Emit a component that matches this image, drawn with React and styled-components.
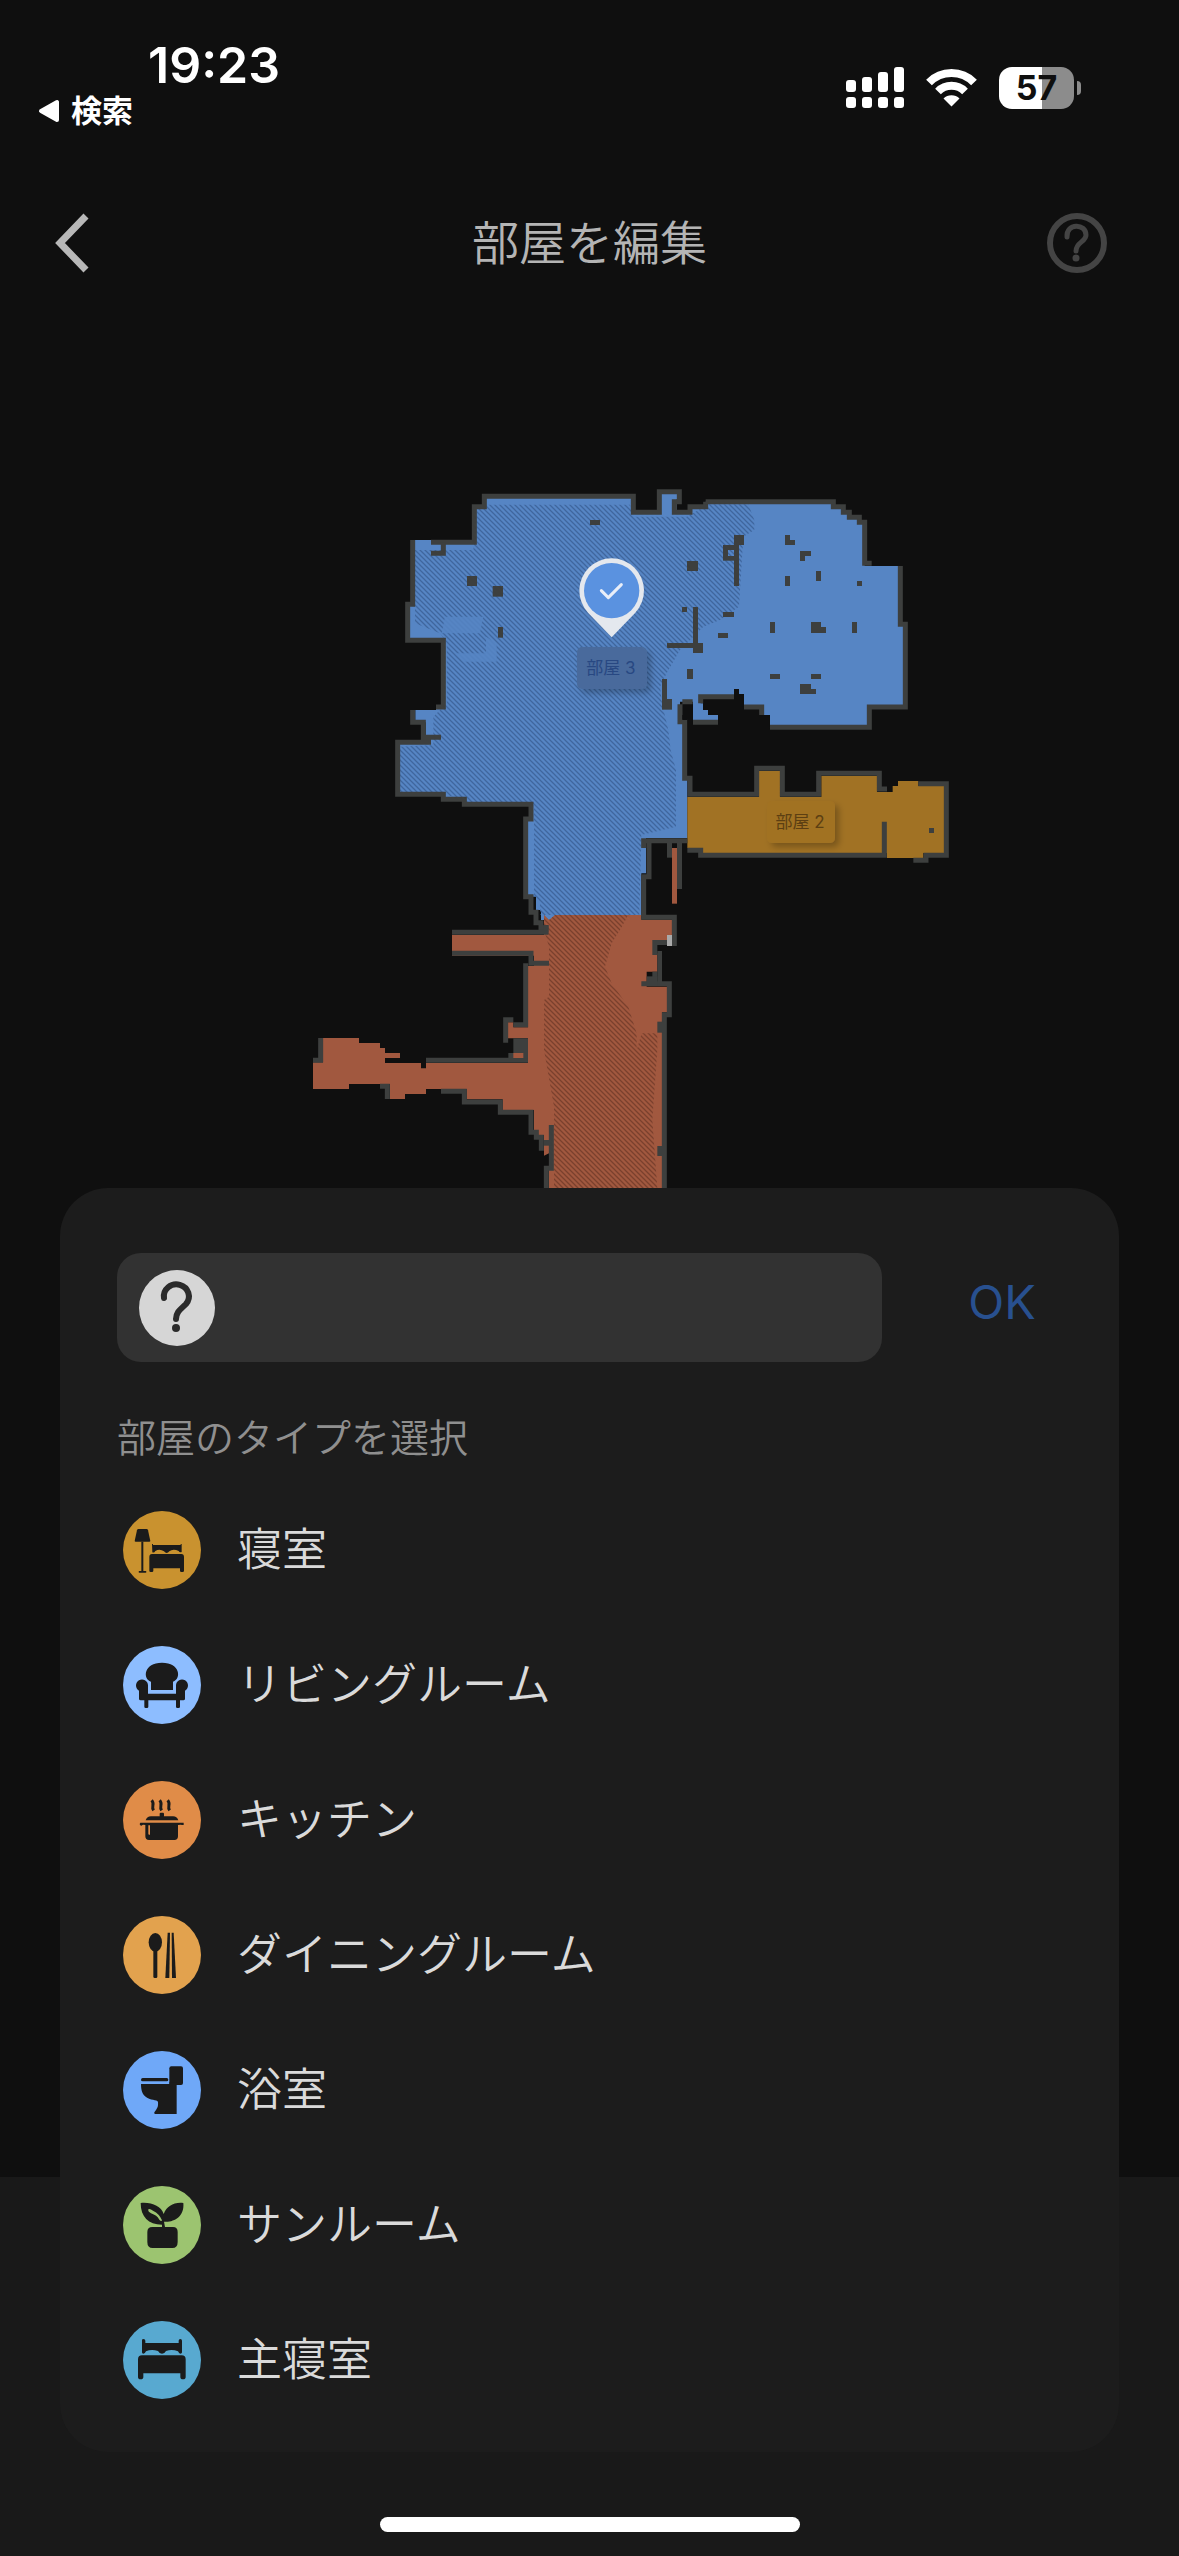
import React, { useState } from "react";
import styled, { createGlobalStyle } from "styled-components";

const GlobalStyle = createGlobalStyle`
  * { box-sizing: border-box; }
  body {
    margin: 0;
    background: #0f0f0f;
    font-family: Inter, "Noto Sans CJK JP", sans-serif;
  }
  button, input { font: inherit; color: inherit; }
`;

const Screen = styled.div`
  min-height: 100vh;
  display: flex;
  flex-direction: column;
  background: #0f0f0f;
`;

/* ---------- status bar ---------- */

const StatusBar = styled.header`
  height: 183px;
  padding: 36px 98px 0 38px;
  display: flex;
  justify-content: space-between;
  align-items: flex-start;
  color: #fff;
`;

const StatusLeft = styled.div`
  display: flex;
  flex-direction: column;
`;

const Clock = styled.time`
  padding-left: 110px;
  font-size: 50px;
  font-weight: 600;
  line-height: 58px;
`;

const ReturnLink = styled.a`
  display: flex;
  align-items: center;
  gap: 11px;
  font-size: 31px;
  font-weight: 700;
  line-height: 34px;
  color: #fff;
  text-decoration: none;
`;

const StatusIcons = styled.div`
  display: flex;
  align-items: center;
  gap: 22px;
  padding-top: 31px;
`;

const Battery = styled.div`
  display: flex;
  align-items: center;
  gap: 3px;
`;

const BatteryBody = styled.div`
  width: 75px;
  height: 42px;
  border-radius: 13px;
  background: linear-gradient(90deg, #fff 57%, #8c8c8c 57%);
  color: #0f0f0f;
  font-size: 34px;
  font-weight: 700;
  line-height: 42px;
  text-align: center;
`;

const BatteryTip = styled.div`
  width: 4px;
  height: 14px;
  border-radius: 0 6px 6px 0;
  background: #8c8c8c;
`;

/* ---------- navigation ---------- */

const NavBar = styled.nav`
  height: 120px;
  padding: 0 72px 0 46px;
  display: grid;
  grid-template-columns: 86px 1fr 60px;
  align-items: center;
`;

const Title = styled.h1`
  margin: 0;
  font-size: 47px;
  font-weight: 350;
  line-height: 60px;
  text-align: center;
  color: #b4b4b4;
`;

const IconButton = styled.button`
  height: 60px;
  padding: 0;
  border: 0;
  background: none;
  display: flex;
  align-items: center;
  cursor: pointer;
`;

/* ---------- stage ---------- */

const Stage = styled.main`
  flex: 1;
  display: grid;
  grid-template-columns: minmax(0, 1fr);
`;

const Backdrop = styled.div`
  grid-area: 1 / 1;
  display: flex;
  flex-direction: column;
  justify-content: space-between;
`;

const MapDrawing = styled.svg`
  width: 100%;
  height: 885px;
  display: block;
`;

const LowerStrip = styled.div`
  height: 379px;
  background: #191919;
`;

const Foreground = styled.div`
  grid-area: 1 / 1;
  padding-top: 885px;
  display: flex;
  flex-direction: column;
`;

const Sheet = styled.section`
  margin: 0 60px;
  padding: 65px 57px 25px;
  border-radius: 48px;
  background: #1c1c1c;
`;

const NameRow = styled.form`
  display: flex;
  align-items: flex-start;
  gap: 60px;
`;

const NameField = styled.label`
  flex: 1;
  min-width: 0;
  height: 109px;
  padding: 0 22px;
  display: flex;
  align-items: center;
  gap: 20px;
  border-radius: 24px;
  background: #323232;
`;

const NameInput = styled.input`
  flex: 1;
  min-width: 0;
  border: 0;
  outline: 0;
  background: transparent;
  font-size: 45px;
  color: #d8d8d8;
`;

const OkButton = styled.button`
  flex: none;
  width: 120px;
  height: 96px;
  padding: 0;
  border: 0;
  background: none;
  font-size: 47px;
  font-weight: 400;
  color: #28508f;
  cursor: pointer;
`;

const SectionLabel = styled.h2`
  margin: 48px 0 16px;
  font-size: 39px;
  font-weight: 350;
  line-height: 56px;
  color: #8f8f8f;
`;

const TypeList = styled.ul`
  margin: 0;
  padding: 0 0 0 6px;
  list-style: none;
`;

const TypeButton = styled.button`
  width: 100%;
  height: 135px;
  padding: 0;
  border: 0;
  background: none;
  display: flex;
  align-items: center;
  gap: 36px;
  font-size: 45px;
  font-weight: 350;
  line-height: 60px;
  color: #dadada;
  text-align: left;
  cursor: pointer;
`;

const HomeArea = styled.footer`
  padding: 65px 0 24px;
  display: flex;
  justify-content: center;
`;

const HomeIndicator = styled.div`
  width: 420px;
  height: 15px;
  border-radius: 8px;
  background: #fff;
`;

/* ---------- small icons ---------- */

const ReturnArrow = () => (
  <svg width="22" height="24" viewBox="0 0 22 24" aria-hidden="true">
    <path d="M19 3 V21 L3 12 Z" fill="#fff" stroke="#fff" strokeWidth="4" strokeLinejoin="round" />
  </svg>
);

const SignalIcon = () => (
  <svg width="58" height="42" viewBox="0 0 58 42" fill="#fff" aria-hidden="true">
    {[13, 10, 5, 0].map((top, i) => (
      <g key={top}>
        <rect x={i * 16} y={top} width="10" height={25 - top} rx="3" />
        <rect x={i * 16} y="30" width="10" height="11" rx="3" />
      </g>
    ))}
  </svg>
);

const WifiIcon = () => (
  <svg width="51" height="38" viewBox="0 0 51 38" aria-hidden="true">
    <g fill="none" stroke="#fff" strokeWidth="8">
      <path d="M3 13.5 A31.500 31.500 0 0 1 48 13.500" />
      <path d="M12 22.500 A19 19 0 0 1 39 22.500" />
    </g>
    <path d="M25.500 37.500 L17.500 29.500 A11.500 11.500 0 0 1 33.500 29.500 Z" fill="#fff" />
  </svg>
);

const BackIcon = () => (
  <svg width="50" height="60" viewBox="0 0 50 60" aria-hidden="true">
    <path d="M40 3 L14 30 L40 57" fill="none" stroke="#b8b8b8" strokeWidth="7" />
  </svg>
);

const HelpIcon = () => (
  <svg width="60" height="60" viewBox="0 0 60 60" fill="none" stroke="#444" aria-hidden="true">
    <circle cx="30" cy="30" r="27" strokeWidth="6" />
    <path d="M20 24 C19 10 39 10 39 22 C39 29 29 29 29 38" strokeWidth="5" strokeLinecap="round" />
    <circle cx="29" cy="45" r="3.500" fill="#444" stroke="none" />
  </svg>
);

const UnknownRoomIcon = () => (
  <svg width="76" height="76" viewBox="0 0 76 76" aria-hidden="true">
    <circle cx="38" cy="38" r="38" fill="#d6d6d6" />
    <path
      d="M25 28 A12.500 12 0 1 1 47 34 C42 39 37 42 37 49"
      fill="none" stroke="#2b2b2b" strokeWidth="6" strokeLinecap="round"
    />
    <circle cx="37" cy="58" r="4" fill="#2b2b2b" />
  </svg>
);

/* ---------- room type icons ---------- */

const glyphs = {
  bedroom: (
    <>
      <path d="M46 54 H71 Q74 54 75 58 L82 90 Q82 92 79 92 H38 Q35 92 35 90 L42 58 Q43 54 46 54 Z" />
      <rect x="55" y="92" width="6" height="90" />
      <rect x="47" y="180" width="23" height="5" rx="2" />
      <path d="M87 99 H90 V102 H173 V99 H176 V123 Q170 126 167 120 Q150 112 139 121 Q135 126 131 126 Q127 126 123 121 Q110 112 97 120 Q94 126 88 124 Z" />
      <path d="M87 129 H175 Q183 129 183 138 V179 Q183 183 179 183 H175 Q171 183 171 179 V172 H91 V179 Q91 183 87 183 H83 Q79 183 79 179 V138 Q79 129 87 129 Z" />
    </>
  ),
  living: (
    <>
      <path d="M84 132 V107 C58 98 62 50 117 50 C172 50 176 98 150 107 V132 Z" />
      <path d="M48 134 A18 18 0 1 1 75 118 V143 H159 V118 A18 18 0 1 1 186 134 V158 Q186 163 181 163 H171 V182 Q171 186 167 186 H163 Q159 186 159 182 V163 H76 V182 Q76 186 72 186 H68 Q64 186 64 182 V163 H53 Q48 163 48 158 Z" />
    </>
  ),
  kitchen: (
    <>
      <g fill="none" stroke="#1b1b1b" strokeWidth="9">
        <path d="M86 58 C97 70 83 76 92 88" />
        <path d="M110 58 C121 70 107 76 116 88" />
        <path d="M134 58 C145 70 131 76 140 88" />
      </g>
      <rect x="110" y="95" width="13" height="14" rx="3" />
      <path d="M68 118 Q72 106 84 106 H150 Q162 106 166 118 Z" />
      <path
        fillRule="evenodd"
        d="M52 125 H182 V132 H177 Q175 130 165 132 V166 Q165 177 154 177 H78 Q67 177 67 166 V132 Q58 130 56 134 Q50 134 50 129 Z M76 133 V158 Q76 161 79 161 H81 V133 Z"
      />
    </>
  ),
  dining: (
    <>
      <ellipse cx="97" cy="79" rx="20" ry="28" />
      <rect x="91" y="96" width="12" height="90" rx="4" />
      <path d="M134 50 H141 L139 186 H127 Z" />
      <path d="M146 50 H152 L159 186 H147 Z" />
    </>
  ),
  bath: (
    <>
      <rect x="139" y="46" width="41" height="56" rx="6" />
      <rect x="54" y="81" width="82" height="10" rx="5" />
      <path d="M54 99 H139 V94 H161 V189 H97 Q92 189 94 184 C103 172 106 168 105 153 C102 145 82 150 66 136 C56 127 54 112 54 99 Z" />
    </>
  ),
  sunroom: (
    <path
      fillRule="evenodd"
      d="M53 51 C86 48 114 60 122 84 C132 60 152 48 181 51 C185 92 152 110 123 107 L126 123 H150 Q164 123 164 138 V168 Q164 186 148 186 H89 Q73 186 73 168 V138 Q73 123 88 123 H117 V116 C76 116 53 92 53 51 Z M76 70 Q74 77 84 82 Q102 88 109 101 Q115 108 117 103 Q110 84 90 74 Q80 66 76 70 Z"
    />
  ),
  master: (
    <>
      <path d="M57 58 Q57 54 61 54 Q67 54 67 59 V66 H167 V59 Q167 54 172 54 Q177 54 177 59 V94 Q177 98 172 98 Q168 98 165 91 Q147 84 129 90 Q125 98 117 98 Q109 98 105 90 Q85 84 69 91 Q66 98 61 98 Q57 98 57 94 Z" />
      <path d="M57 103 H176 Q188 103 188 115 V168 Q188 175 180 175 Q172 175 172 168 V157 H61 V168 Q61 175 53 175 Q45 175 45 168 V115 Q45 103 57 103 Z" />
    </>
  ),
};

const RoomTypeIcon = ({ color, glyph }) => (
  <svg width="78" height="78" viewBox="0 0 234 234" fill="#1b1b1b" aria-hidden="true">
    <circle cx="117" cy="117" r="117" fill={color} />
    {glyphs[glyph]}
  </svg>
);

const roomTypes = [
  { name: "寝室", glyph: "bedroom", color: "#c9922f" },
  { name: "リビングルーム", glyph: "living", color: "#8dbdff" },
  { name: "キッチン", glyph: "kitchen", color: "#e08c48" },
  { name: "ダイニングルーム", glyph: "dining", color: "#e2a24e" },
  { name: "浴室", glyph: "bath", color: "#6fa8f8" },
  { name: "サンルーム", glyph: "sunroom", color: "#9cc470" },
  { name: "主寝室", glyph: "master", color: "#58a9d0" },
];

/* ---------- floor map ---------- */

const WALL = "#3d3f3e";
const BLUE = "#5685c4";
const RED = "#a1583f";
const ORANGE = "#a17224";

const Blocks = ({ cells, fill = WALL }) =>
  cells.map(([x, y, w, h]) => <rect key={`${x}-${y}`} x={x} y={y} width={w} height={h} fill={fill} />);

const FloorMap = () => (
  <MapDrawing viewBox="0 303 1179 885" role="img" aria-label="部屋">
    <defs>
      <pattern id="hatchBlue" width="15" height="15" patternUnits="userSpaceOnUse">
        <path d="M-3 -3 L18 18 M-3 12 L3 18 M12 -3 L18 3" stroke="#3f669e" strokeWidth="4" />
      </pattern>
      <pattern id="hatchRed" width="15" height="15" patternUnits="userSpaceOnUse">
        <path d="M-3 -3 L18 18 M-3 12 L3 18 M12 -3 L18 3" stroke="#7a402d" strokeWidth="4" />
      </pattern>
      <filter id="tagShadow" x="-30%" y="-30%" width="170%" height="180%">
        <feDropShadow dx="4" dy="4" stdDeviation="3" floodColor="#000" floodOpacity="0.25" />
      </filter>
    </defs>

    <g transform="translate(300 470) scale(0.333333)">
      {/* blue room floor */}
      <g fill={BLUE}>
        <path
          transform="translate(240 0)"
          d="M313 79 H760 V127 H838 V72 H890 V1104 H922 V1104 H798 V1210 H784 V1338 H525 L510 1350 H483 V1320 H468 V1280 H444 V1050 H453 V1003 H253 V988 H190 V973 H53 V817 H137 V757 H106 V720 H168 V711 H190 V511 H83 V403 H98 V210 H153 V217 H283 V110 H313 Z"
        />
        <path
          transform="translate(1080 0)"
          d="M0 72 H52 V87 H43 V127 H90 V110 H137 V95 H520 V110 H550 V127 H568 V142 H598 V157 H614 V288 H715 V463 H736 V711 H628 V772 H330 V735 H305 V711 H252 V672 H237 V657 H222 V680 H122 V700 H129 V720 H144 V735 H174 V757 H99 V695 H60 V757 H74 V925 H82 V1104 H0 Z"
        />
      </g>
      <path
        fill="url(#hatchBlue)"
        d="M560 104 H990 L1000 140 H1160 L1225 103 H1345 L1363 150 V180 L1330 200 L1317 410 L1260 450 L1210 470 L1140 540 L1100 610 L1080 650 L1086 700 L1105 780 L1112 840 L1128 900 V1070 L1024 1095 L1018 1335 H720 V1300 L702 1280 V1003 H493 V988 L430 973 L300 965 V830 L400 825 V740 L440 700 V520 L420 490 L345 460 V240 H520 L530 120 Z"
      />
      <g fill={BLUE} opacity="0.85" transform="translate(240 0)">
        <path d="M195 440 H310 L300 490 H185 Z" />
        <path d="M318 500 L350 520 V575 H250 L225 550 H318 Z" />
      </g>

      {/* red room floor */}
      <g transform="translate(0 1050)">
        <path
          fill={RED}
          d="M732 285 L747 300 L765 285 H1024 V299 H1116 V360 H1064 V400 H1072 V455 H1040 V500 H1101 V577 H1086 V1104 H747 V1000 L732 1007 V945 H702 V870 H608 V838 H500 V807 H378 V822 H315 V837 H270 V792 H147 V807 H39 V727 H69 V654 H177 V669 H240 V684 H255 V699 H300 V714 H255 V729 H363 V745 H378 V729 H684 V655 H624 V607 H640 V622 H684 V438 H702 V407 H456 V345 H732 Z"
        />
        <path
          fill="url(#hatchRed)"
          d="M732 285 L747 300 L765 285 H985 L960 330 L935 370 L915 440 L935 490 L985 560 L1010 640 V690 L1025 640 H1072 V690 L1057 900 L1072 1104 H762 V860 L732 690 V540 L747 530 V380 L732 330 Z"
        />
      </g>

      {/* orange room floor */}
      <path
        transform="translate(1080 0)"
        fill={ORANGE}
        d="M82 981 H297 V903 H360 V981 H484 V918 H651 V966 H698 V948 H714 V933 H775 V948 H852 V1149 H790 V1164 H681 V1149 H129 V1134 H82 Z"
      />

      {/* walls */}
      <g fill="none" stroke={WALL} strokeWidth="15">
        <g transform="translate(240 0)">
          <path d="M153 217 H283 V110 H313 V79 H760 V127 H838 V65 H898 V95 H883 V127 H930 V110 H977 V95" />
          <path d="M98 210 V403 H83 V511 H190 V711 H168" />
          <path d="M98 720 V757 H130 V802 H183 M153 817 H53 V973 H190 V988 H253 V1003 H453 V1047 H437 V1280 H453 V1327 H468 V1358 H483 V1373 H498 V1387" />
          <path d="M153 250 H190 V217" />
        </g>
        <g transform="translate(1080 0)">
          <path d="M137 95 H520 V110 H550 V127 H568 V142 H598 V157 H614 V280 H635" />
          <path d="M721 288 V463 H736 V711 H628 V772 H330" />
          <path d="M252 711 H305 V735 M222 680 H122 V700 M99 757 H174" />
          <path d="M98 695 H67 M60 703 V755 H74 V925 H90 V973 H290 V895 H367 V973 H476 V910 H658 V957 H681" />
          <path d="M775 941 H859 V1156 H798 V1171 H760" />
          <path d="M82 1141 H122 V1156 H673 V1055" />
        </g>
        <g transform="translate(0 1050)">
          <path d="M1162 62 H1031 V84 M1047 62 V170 H1031 V292 H1123 V378" />
          <path d="M738 315 V337 H456 M456 400 H693 V430 H747 M677 430 V614 H640" />
          <path d="M617 668 V599 H640 M378 721 H684 M62 654 V727 M39 721 H69" />
          <path d="M240 799 H262 V837 M423 814 H493 V846 H601 V877 H693 V937 H709 V952 H724 V992" />
          <path d="M754 915 V1052 M739 1037 V1104" />
          <path d="M1024 491 H1108 V584 H1093 V1104" />
        </g>
      </g>

      {/* furniture and obstacles */}
      <g transform="translate(240 0)">
        <Blocks cells={[[630, 150, 30, 15], [261, 318, 30, 30], [338, 348, 31, 32], [354, 471, 15, 32], [846, 627, 15, 92], [861, 687, 15, 32], [861, 519, 80, 15]]} />
      </g>
      <g transform="translate(1080 0)">
        <Blocks
          cells={[
            [222, 195, 30, 30], [189, 225, 48, 15], [189, 240, 15, 32], [204, 258, 33, 14], [222, 240, 15, 108],
            [81, 273, 33, 30], [66, 411, 15, 15], [99, 411, 15, 108], [99, 519, 30, 30], [189, 426, 33, 15],
            [174, 489, 30, 15], [81, 597, 18, 30], [375, 195, 15, 30], [390, 210, 15, 15], [420, 243, 33, 15],
            [420, 258, 15, 15], [468, 303, 15, 30], [375, 318, 15, 30], [591, 333, 15, 15], [330, 456, 15, 33],
            [453, 456, 30, 33], [483, 471, 15, 18], [576, 456, 15, 33], [330, 612, 30, 15], [453, 612, 30, 15],
            [420, 642, 33, 30], [453, 657, 15, 15], [807, 1074, 15, 15],
          ]}
        />
        <Blocks fill="#0f0f0f" cells={[[222, 657, 15, 15], [67, 735, 15, 15]]} />
      </g>
      <g transform="translate(0 1050)">
        <Blocks
          cells={[
            [640, 655, 44, 44], [625, 699, 59, 16], [732, 960, 22, 17], [1057, 360, 44, 15], [1057, 375, 15, 30],
            [1072, 393, 14, 105], [1057, 455, 15, 30], [1040, 469, 32, 20], [1072, 605, 20, 33], [1072, 978, 20, 30],
            [1101, 69, 15, 44], [1131, 69, 15, 138],
          ]}
        />
        <Blocks fill={RED} cells={[[640, 699, 30, 15], [1116, 84, 15, 167]]} />
        <Blocks fill="#aaaaaa" cells={[[1101, 345, 15, 33]]} />
      </g>

      {/* selection pin */}
      <g transform="translate(240 0)">
        <path d="M695 502 L624 428 A97 97 0 1 1 766 428 Z" fill="#e4e8ee" />
        <circle cx="695" cy="362" r="83" fill="#5a92e0" />
        <path d="M664 362 L685 383 L724 344" fill="none" stroke="#e9eef8" strokeWidth="9" strokeLinecap="round" strokeLinejoin="round" />
      </g>
    </g>

    {/* room name tags */}
    <g fontSize="17" textAnchor="middle">
      <rect x="577" y="647" width="70" height="42" rx="5" fill="#486b9c" filter="url(#tagShadow)" />
      <text x="611" y="674" fill="#284882">部屋 3</text>
      <rect x="767" y="801" width="68" height="42" rx="5" fill="#a17224" filter="url(#tagShadow)" />
      <text x="800" y="828" fill="#5c3f12">部屋 2</text>
    </g>
  </MapDrawing>
);

export default function App() {
  const [name, setName] = useState("");

  return (
    <Screen>
      <GlobalStyle />
      <StatusBar>
        <StatusLeft>
          <Clock>19:23</Clock>
          <ReturnLink href="#search">
            <ReturnArrow />
            検索
          </ReturnLink>
        </StatusLeft>
        <StatusIcons>
          <SignalIcon />
          <WifiIcon />
          <Battery>
            <BatteryBody>57</BatteryBody>
            <BatteryTip />
          </Battery>
        </StatusIcons>
      </StatusBar>

      <NavBar>
        <IconButton type="button" aria-label="戻る">
          <BackIcon />
        </IconButton>
        <Title>部屋を編集</Title>
        <IconButton type="button" aria-label="ヘルプ">
          <HelpIcon />
        </IconButton>
      </NavBar>

      <Stage>
        <Backdrop>
          <FloorMap />
          <LowerStrip />
        </Backdrop>
        <Foreground>
          <Sheet>
            <NameRow onSubmit={(e) => e.preventDefault()}>
              <NameField>
                <UnknownRoomIcon />
                <NameInput
                  type="text"
                  aria-label="部屋の名前"
                  value={name}
                  onChange={(e) => setName(e.target.value)}
                />
              </NameField>
              <OkButton type="submit">OK</OkButton>
            </NameRow>
            <SectionLabel>部屋のタイプを選択</SectionLabel>
            <TypeList>
              {roomTypes.map((type) => (
                <li key={type.name}>
                  <TypeButton type="button" onClick={() => setName(type.name)}>
                    <RoomTypeIcon color={type.color} glyph={type.glyph} />
                    {type.name}
                  </TypeButton>
                </li>
              ))}
            </TypeList>
          </Sheet>
          <HomeArea>
            <HomeIndicator />
          </HomeArea>
        </Foreground>
      </Stage>
    </Screen>
  );
}
